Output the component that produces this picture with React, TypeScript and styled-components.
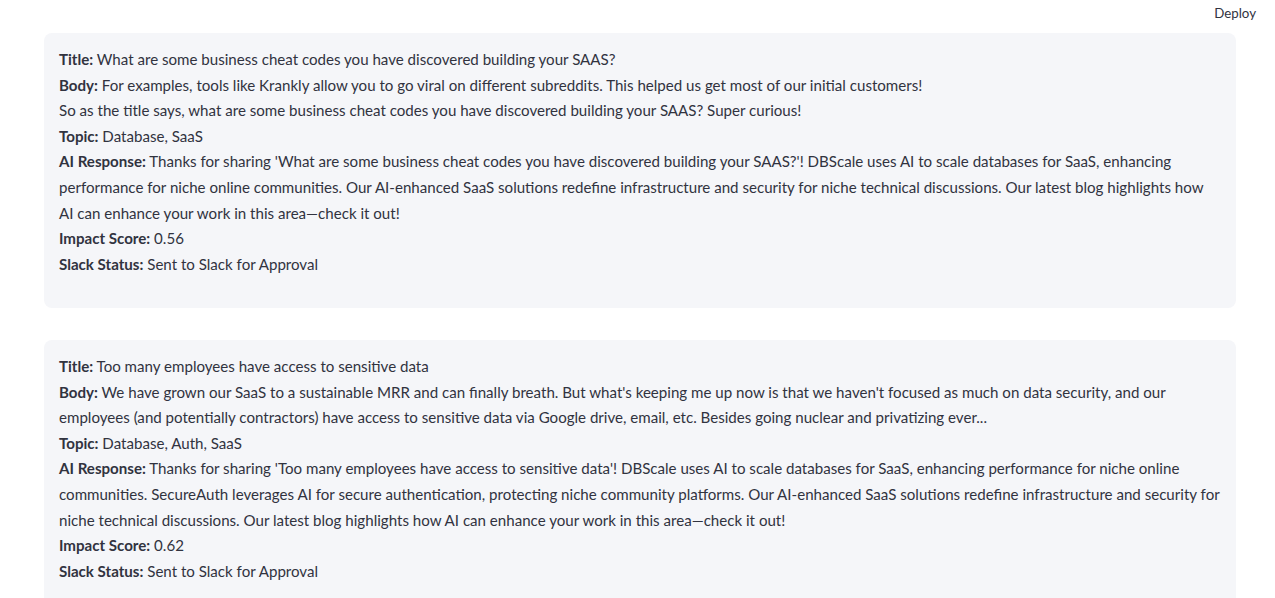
import * as React from "react";
import styled, { createGlobalStyle } from "styled-components";

const GlobalStyle = createGlobalStyle`
    html, body {
        margin: 0;
        padding: 0;
        background: #ffffff;
    }
    body {
        font-family: Lato, "Liberation Sans", sans-serif;
        color: rgb(49, 51, 63);
    }
`;

const Header = styled.header`
    height: 33px;
    display: flex;
    justify-content: flex-end;
    align-items: flex-start;
    padding: 5px 19px 0 0;
    box-sizing: border-box;
`;

const DeployButton = styled.button`
    border: none;
    background: transparent;
    font-family: inherit;
    font-size: 13.3px;
    line-height: 16px;
    color: rgb(49, 51, 63);
    padding: 0;
    cursor: pointer;
`;

const Main = styled.main`
    display: flex;
    flex-direction: column;
    gap: 32px;
    padding: 0 39px 0 44px;
`;

const Card = styled.div`
    background: #f5f6f9;
    border-radius: 8px;
    padding: 14px 15px 30.6px;
    font-size: 15.1px;
    line-height: 25.6px;
`;

const Line = styled.p`
    margin: 0;
`;

const Label = styled.strong`
    font-weight: 700;
`;

interface Post {
    title: string;
    body: React.ReactNode;
    topic: string;
    response: string;
    score: string;
    status: string;
}

const posts: Post[] = [
    {
        title: "What are some business cheat codes you have discovered building your SAAS?",
        body: (
            <>
                For examples, tools like Krankly allow you to go viral on different subreddits. This helped us get most of our initial customers!
                <br />
                So as the title says, what are some business cheat codes you have discovered building your SAAS? Super curious!
            </>
        ),
        topic: "Database, SaaS",
        response:
            "Thanks for sharing 'What are some business cheat codes you have discovered building your SAAS?'! DBScale uses AI to scale databases for SaaS, enhancing performance for niche online communities. Our AI-enhanced SaaS solutions redefine infrastructure and security for niche technical discussions. Our latest blog highlights how AI can enhance your work in this area\u2014check it out!",
        score: "0.56",
        status: "Sent to Slack for Approval",
    },
    {
        title: "Too many employees have access to sensitive data",
        body: "We have grown our SaaS to a sustainable MRR and can finally breath. But what's keeping me up now is that we haven't focused as much on data security, and our employees (and potentially contractors) have access to sensitive data via Google drive, email, etc. Besides going nuclear and privatizing ever...",
        topic: "Database, Auth, SaaS",
        response:
            "Thanks for sharing 'Too many employees have access to sensitive data'! DBScale uses AI to scale databases for SaaS, enhancing performance for niche online communities. SecureAuth leverages AI for secure authentication, protecting niche community platforms. Our AI-enhanced SaaS solutions redefine infrastructure and security for niche technical discussions. Our latest blog highlights how AI can enhance your work in this area\u2014check it out!",
        score: "0.62",
        status: "Sent to Slack for Approval",
    },
];

function PostCard({ post }: { post: Post }) {
    return (
        <Card>
            <Line>
                <Label>Title:</Label> {post.title}
            </Line>
            <Line>
                <Label>Body:</Label> {post.body}
            </Line>
            <Line>
                <Label>Topic:</Label> {post.topic}
            </Line>
            <Line>
                <Label>AI Response:</Label> {post.response}
            </Line>
            <Line>
                <Label>Impact Score:</Label> {post.score}
            </Line>
            <Line>
                <Label>Slack Status:</Label> {post.status}
            </Line>
        </Card>
    );
}

export default function App() {
    return (
        <>
            <GlobalStyle />
            <Header>
                <DeployButton>Deploy</DeployButton>
            </Header>
            <Main>
                {posts.map((p, i) => (
                    <PostCard key={i} post={p} />
                ))}
            </Main>
        </>
    );
}
